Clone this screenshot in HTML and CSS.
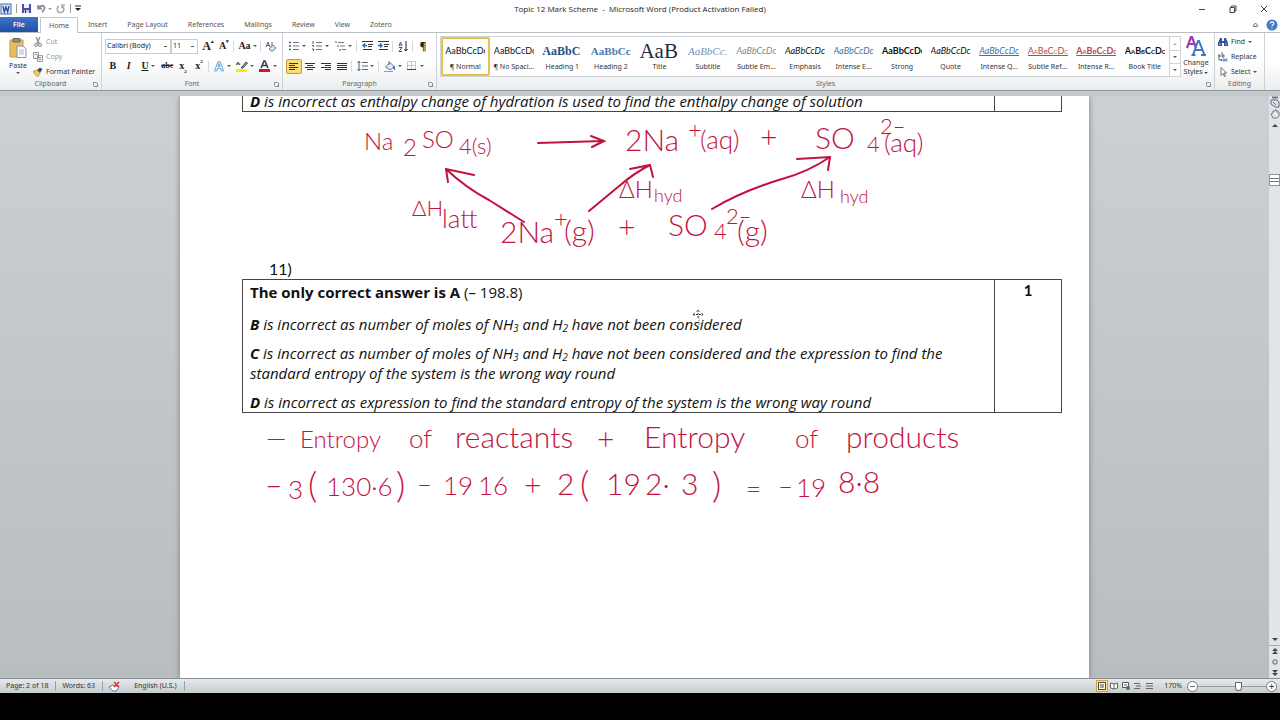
FILE: index.html
```
<!DOCTYPE html>
<html lang="en">
<head>
    <meta charset="UTF-8">
    <meta name="viewport" content="width=device-width, initial-scale=1.0">
    <title>Topic 12 Mark Scheme - Microsoft Word</title>
    <link rel="stylesheet" href="styles.css">
</head>
<body>
    <div class="app">
        <header class="title-bar">
            <div class="quick-access">
                <svg width="12" height="12" viewBox="0 0 12 12"><rect x="1" y="1" width="10" height="10" fill="#e4eefa" stroke="#3c6cb4"/><path d="M3 3l1.3 6L6 4l1.7 5L9 3" fill="none" stroke="#1f4f9f" stroke-width="1.4"/></svg>
                <span class="bar"></span>
                <button class="plain" aria-label="Save"><svg width="11" height="11" viewBox="0 0 11 11"><path d="M1 1h9v9H1z" fill="#4b4da8"/><path d="M3 1h5v4H3z" fill="#eef"/><path d="M3 7h5v3H3z" fill="#c9cdf0"/><path d="M4 7h1v3H4z" fill="#334"/></svg></button>
                <button class="plain" aria-label="Undo"><svg width="16" height="11" viewBox="0 0 16 11"><path d="M2 2v3.5h4M2.5 5C4 2 8.500 2 8.500 5c0 2-1.500 3-2.500 4" fill="none" stroke="#8b90a3" stroke-width="1.800"/><path d="M12 5h4l-2 2z" fill="#999"/></svg></button>
                <button class="plain" aria-label="Redo"><svg width="10" height="11" viewBox="0 0 10 11"><path d="M3 3C0 5 1 9.500 4.500 9.500S9 5 6.500 3.500M9 2H6v3.500" fill="none" stroke="#a9acb4" stroke-width="1.600"/></svg></button>
                <span class="bar"></span>
                <button class="plain" aria-label="Customize toolbar"><svg width="6" height="7" viewBox="0 0 6 7"><path d="M0 1h6" stroke="#222"/><path d="M0 3h6L3 6z" fill="#222"/></svg></button>
            </div>
            <h1 class="title">Topic 12 Mark Scheme &nbsp;-&nbsp; Microsoft Word (Product Activation Failed)</h1>
            <div class="window-buttons">
                <button class="plain" aria-label="Minimize"><svg width="8" height="8" viewBox="0 0 8 8"><path d="M1 4.500h6" stroke="#444"/></svg></button>
                <button class="plain" aria-label="Restore"><svg width="8" height="8" viewBox="0 0 8 8"><path d="M1 2.500h4.500v5H1zM2.500 2.500V1H7v5H5.500" fill="none" stroke="#444"/></svg></button>
                <button class="plain" aria-label="Close"><svg width="8" height="8" viewBox="0 0 8 8"><path d="M1 1l6 6M7 1L1 7" stroke="#444"/></svg></button>
            </div>
        </header>

        <nav class="tabs">
            <button class="tab file">File</button>
            <button class="tab active">Home</button>
            <button class="tab">Insert</button>
            <button class="tab">Page Layout</button>
            <button class="tab">References</button>
            <button class="tab">Mailings</button>
            <button class="tab">Review</button>
            <button class="tab">View</button>
            <button class="tab">Zotero</button>
            <div class="tab-help">
                <button class="plain" aria-label="Collapse ribbon"><svg width="7" height="6" viewBox="0 0 7 6"><path d="M1 4l2.500-3L6 4M1.500 4.500h4" fill="none" stroke="#666"/></svg></button>
                <button class="plain" aria-label="Help"><svg width="12" height="12" viewBox="0 0 12 12"><circle cx="6" cy="6" r="5.500" fill="#3f7cc8"/><path d="M4.300 4.500c0-2.300 3.500-2.200 3.500 0C7.800 5.800 6 5.800 6 7.200M6 8.400v1.200" fill="none" stroke="#fff" stroke-width="1.200"/></svg></button>
            </div>
        </nav>

        <div class="ribbon">
            <section class="group clipboard">
                <div class="group-body">
                    <button class="big-button">
                        <svg width="20" height="22" viewBox="0 0 20 22"><path d="M2 3h13v17H2z" fill="#e9bd5e" stroke="#c99a3c"/><path d="M5 1.500h7V5H5z" fill="#8d8d8d" stroke="#666"/><path d="M9 9h6l3 3v8.500H9z" fill="#fff" stroke="#7c93b8"/><path d="M11 13h5M11 15h5M11 17h5" stroke="#a6b9d6"/></svg>
                        <span>Paste</span>
                        <i class="caret"></i>
                    </button>
                    <div class="command-list">
                        <button class="command muted"><svg width="10" height="10" viewBox="0 0 10 10"><path d="M3 0l3.500 7M7 0L3.500 7" stroke="#888" stroke-width="1.200"/><circle cx="3" cy="8" r="1.500" fill="none" stroke="#888"/><circle cx="7" cy="8" r="1.500" fill="none" stroke="#888"/></svg>Cut</button>
                        <button class="command muted"><svg width="10" height="10" viewBox="0 0 10 10"><path d="M.5.500h5v6h-5zM4.500 3.500h5v6h-5z" fill="#eee" stroke="#999"/><path d="M6 5.500h2M6 7.500h2M2 2.500h2" stroke="#999"/></svg>Copy</button>
                        <button class="command"><svg width="10" height="10" viewBox="0 0 10 10"><path d="M0 4l4-1 3 3-2 4C3 9 1 7 0 4z" fill="#efc95b" stroke="#b38a2a" stroke-width=".6"/><path d="M4 3l3-2.500L9.500 2 7 6z" fill="#454f75"/></svg>Format Painter</button>
                    </div>
                </div>
                <h2 class="group-name">Clipboard <i class="launcher"></i></h2>
            </section>

            <section class="group font">
                <div class="group-body rows">
                    <div class="tool-row">
                        <select class="font-select" aria-label="Font"><option>Calibri (Body)</option></select>
                        <select class="size-select" aria-label="Font size"><option>11</option></select>
                        <button class="tool serif grow-font">A<sup>▴</sup></button>
                        <button class="tool serif">A<sup>▾</sup></button>
                        <span class="sep"></span>
                        <button class="tool drop serif">Aa<i class="caret"></i></button>
                        <span class="sep"></span>
                        <button class="tool" aria-label="Clear formatting"><svg width="12" height="11" viewBox="0 0 12 11"><path d="M1 6l2-5 2 5M2 4.500h2M7 1v5" fill="none" stroke="#567"/><path d="M4 8l4-4 3 3-3 3H6z" fill="#d9dbf0" stroke="#7782a3"/></svg></button>
                    </div>
                    <div class="tool-row">
                        <button class="tool serif">B</button>
                        <button class="tool serif italic">I</button>
                        <button class="tool drop serif"><u>U</u><i class="caret"></i></button>
                        <button class="tool serif small"><s>abc</s></button>
                        <button class="tool serif">x<sub>2</sub></button>
                        <button class="tool serif">x<sup>2</sup></button>
                        <span class="sep"></span>
                        <button class="tool drop" aria-label="Text effects"><svg width="12" height="12" viewBox="0 0 12 12"><path d="M1.500 11L5 1.500h2L10.500 11H8.300L7.600 8.500H4.400L3.700 11zM5 6.700h2L6 3.500z" fill="#e9f4fd" stroke="#6ea6d6"/></svg><i class="caret"></i></button>
                        <button class="tool drop" aria-label="Highlight colour"><svg width="12" height="12" viewBox="0 0 12 12"><path d="M0 5l2-3 2 3M5 8l5-6 1.500 1L7 8z" fill="#9cae8e" stroke="#444"/><path d="M0 9h11v3H0z" fill="#f8f000"/></svg><i class="caret"></i></button>
                        <button class="tool drop" aria-label="Font colour"><svg width="12" height="12" viewBox="0 0 12 12"><path d="M2 8l3-7h1l3 7M3 5.500h5" fill="none" stroke="#27395f" stroke-width="1.500"/><path d="M0 9h11v3H0z" fill="#d8141c"/></svg><i class="caret"></i></button>
                    </div>
                </div>
                <h2 class="group-name">Font <i class="launcher"></i></h2>
            </section>

            <section class="group paragraph">
                <div class="group-body rows">
                    <div class="tool-row">
                        <button class="tool drop" aria-label="Bullets"><svg width="11" height="10" viewBox="0 0 11 10"><path d="M0 1.500h2M0 5h2M0 8.500h2" stroke="#3d5a92" stroke-width="1.500"/><path d="M4 1.500h6M4 5h6M4 8.500h6" stroke="#777"/></svg><i class="caret"></i></button>
                        <button class="tool drop" aria-label="Numbering"><svg width="11" height="10" viewBox="0 0 11 10"><path d="M1 0v3M0 4.500h1.500v1.500M0 8h1.500v2" fill="none" stroke="#3d5a92"/><path d="M4 1.500h6M4 5h6M4 8.500h6" stroke="#777"/></svg><i class="caret"></i></button>
                        <button class="tool drop" aria-label="Multilevel list"><svg width="11" height="10" viewBox="0 0 11 10"><path d="M1 0v2M3 4v2M5 8v2" stroke="#3d5a92"/><path d="M3 1.500h6M5 5h5M7 8.500h4" stroke="#777"/></svg><i class="caret"></i></button>
                        <span class="sep"></span>
                        <button class="tool" aria-label="Decrease indent"><svg width="11" height="10" viewBox="0 0 11 10"><path d="M0 .5h11M6 3.500h5M6 5.500h4M1 8.500h9" stroke="#333"/><path d="M5 4.500H1M3 2.500l-2 2 2 2" fill="none" stroke="#3262ab" stroke-width="1.300"/></svg></button>
                        <button class="tool" aria-label="Increase indent"><svg width="11" height="10" viewBox="0 0 11 10"><path d="M0 .5h11M6 3.500h5M6 5.500h4M1 8.500h9" stroke="#333"/><path d="M0 4.500h4M2 2.500l2 2-2 2" fill="none" stroke="#3262ab" stroke-width="1.300"/></svg></button>
                        <span class="sep"></span>
                        <button class="tool" aria-label="Sort"><svg width="11" height="11" viewBox="0 0 11 11"><path d="M1 5l1.500-4L4 5M1.500 4h2" fill="none" stroke="#355ba0"/><path d="M1 6.500h3l-3 4h3" fill="none" stroke="#9a2635"/><path d="M8 0v10M6.500 8L8 10l1.500-2" fill="none" stroke="#222"/></svg></button>
                        <span class="sep"></span>
                        <button class="tool pilcrow">¶</button>
                    </div>
                    <div class="tool-row">
                        <button class="tool on" aria-label="Align left"><svg width="10" height="9" viewBox="0 0 10 9"><path d="M0 1.500h9M0 3.500h6M0 5.500h9M0 7.500h6" stroke="#333"/></svg></button>
                        <button class="tool" aria-label="Center"><svg width="10" height="9" viewBox="0 0 10 9"><path d="M0 1.500h10M2 3.500h6M0 5.500h10M2 7.500h6" stroke="#333"/></svg></button>
                        <button class="tool" aria-label="Align right"><svg width="10" height="9" viewBox="0 0 10 9"><path d="M0 1.500h10M4 3.500h6M0 5.500h10M4 7.500h6" stroke="#333"/></svg></button>
                        <button class="tool" aria-label="Justify"><svg width="10" height="9" viewBox="0 0 10 9"><path d="M0 1.500h10M0 3.500h10M0 5.500h10M0 7.500h10" stroke="#333"/></svg></button>
                        <span class="sep"></span>
                        <button class="tool drop" aria-label="Line spacing"><svg width="11" height="10" viewBox="0 0 11 10"><path d="M2 0v10M.5 2L2 .5 3.500 2M.5 8L2 9.500 3.500 8" fill="none" stroke="#3d5a92"/><path d="M5 1.500h6M5 5h6M5 8.500h6" stroke="#666"/></svg><i class="caret"></i></button>
                        <span class="sep"></span>
                        <button class="tool drop" aria-label="Shading"><svg width="12" height="11" viewBox="0 0 12 11"><path d="M1.500 6L6 1.500 10 5.500 6.500 9z" fill="#e7edf7" stroke="#5b6d91"/><path d="M5 4V0" stroke="#3d6db8"/><path d="M9 5c2 0 2.500 2 2 4-1 0-2-1-2-4z" fill="#3d6db8"/><path d="M0 10.500h9" stroke="#999"/></svg><i class="caret"></i></button>
                        <button class="tool drop" aria-label="Borders"><svg width="11" height="10" viewBox="0 0 11 10"><path d="M.5.500h8v8h-8zM4.500.500v8M.5 4.500h8" fill="none" stroke="#999" stroke-dasharray="1 1"/><path d="M0 8.500h9" stroke="#444"/></svg><i class="caret"></i></button>
                    </div>
                </div>
                <h2 class="group-name">Paragraph <i class="launcher"></i></h2>
            </section>

            <section class="group styles">
                <div class="group-body">
                    <div class="gallery">
                        <button class="style selected"><span class="sample">AaBbCcDc</span>¶ Normal</button>
                        <button class="style"><span class="sample">AaBbCcDc</span>¶ No Spaci...</button>
                        <button class="style"><span class="sample heading1">AaBbC</span>Heading 1</button>
                        <button class="style"><span class="sample heading2">AaBbCc</span>Heading 2</button>
                        <button class="style"><span class="sample doc-title">AaB</span>Title</button>
                        <button class="style"><span class="sample subtitle">AaBbCc.</span>Subtitle</button>
                        <button class="style"><span class="sample italic grey">AaBbCcDc</span>Subtle Em...</button>
                        <button class="style"><span class="sample italic">AaBbCcDc</span>Emphasis</button>
                        <button class="style"><span class="sample italic blue">AaBbCcDc</span>Intense E...</button>
                        <button class="style"><span class="sample strong">AaBbCcDc</span>Strong</button>
                        <button class="style"><span class="sample italic">AaBbCcDc</span>Quote</button>
                        <button class="style"><span class="sample italic blue underline">AaBbCcDc</span>Intense Q...</button>
                        <button class="style"><span class="sample caps red underline">AaBbCcDc</span>Subtle Ref...</button>
                        <button class="style"><span class="sample caps red underline strong">AaBbCcDc</span>Intense R...</button>
                        <button class="style"><span class="sample caps strong">AaBbCcDc</span>Book Title</button>
                        <div class="gallery-scroll">
                            <button aria-label="Previous styles"><i class="caret up"></i></button>
                            <button aria-label="Next styles"><i class="caret"></i></button>
                            <button aria-label="More styles"><i class="caret more"></i></button>
                        </div>
                    </div>
                    <button class="big-button">
                        <svg width="20" height="20" viewBox="0 0 20 20"><path d="M1 12L5 1h1l4 11M3 8h5" fill="none" stroke="#9b3fb5" stroke-width="2.200"/><path d="M7 19l5-14h1l5.500 14M9 14h7M5.500 19h4M15 19h5" fill="none" stroke="#3f78c4" stroke-width="2"/></svg>
                        <span>Change Styles <i class="caret"></i></span>
                    </button>
                </div>
                <h2 class="group-name">Styles <i class="launcher"></i></h2>
            </section>

            <section class="group editing">
                <div class="group-body">
                    <div class="command-list">
                        <button class="command"><svg width="10" height="10" viewBox="0 0 10 10"><path d="M2 1h2v3h2V1h2l2 5v3H6V6H4v3H0V6z" fill="#34549a"/><path d="M1 7h2M7 7h2" stroke="#a8bde6"/></svg>Find<i class="caret"></i></button>
                        <button class="command"><svg width="10" height="10" viewBox="0 0 10 10"><path d="M0 3h2v2H0zM4 0v5h2V3H4" fill="none" stroke="#444" stroke-width=".8"/><path d="M1 6v2h3M3 7l1 1-1 1" fill="none" stroke="#3b7c4a"/><path d="M9.500 7H8v2h1.500M5 7h2v2H5z" fill="none" stroke="#3366ad" stroke-width=".8"/></svg>Replace</button>
                        <button class="command"><svg width="10" height="10" viewBox="0 0 10 10"><path d="M3 .5v8l2-2 1.500 3 1-.5L6 6h2.500z" fill="#fff" stroke="#555" stroke-width=".8"/></svg>Select<i class="caret"></i></button>
                    </div>
                </div>
                <h2 class="group-name">Editing</h2>
            </section>
        </div>

        <div class="workspace">
            <main class="desk">
                <article class="page">
                    <table class="answer previous">
                        <tr>
                            <td><p><b>D</b> is incorrect as enthalpy change of hydration is used to find the enthalpy change of solution</p></td>
                            <td class="mark"></td>
                        </tr>
                    </table>

                    <!-- Hess cycle -->
                    <svg class="ink" viewBox="0 0 820 147">
                        <g class="arrows">
                            <path d="M296 31L361 29M349 24L362 29L350 35"/>
                            <path d="M282 110L247 88Q224 76 204 57M232 63L204 57L206 70"/>
                            <path d="M347 99L376 75Q392 61 408 53M388 57L408 53L411 65"/>
                            <path d="M470 97Q500 79 540 67Q566 60 588 45M555 47L588 45L586 58"/>
                        </g>
                        <text x="122" y="38" class="ink-l">Na</text>
                        <text x="161" y="44" class="ink-l">2</text>
                        <text x="180" y="36" class="ink-l">SO</text>
                        <text x="217" y="42" class="ink-m">4(s)</text>
                        <text x="383" y="39" class="ink-xxl">2Na</text>
                        <text x="446" y="26" class="ink-l">+</text>
                        <text x="458" y="37" class="ink-xl">(aq)</text>
                        <text x="518" y="36" class="ink-xxl">+</text>
                        <text x="573" y="37" class="ink-xxl">SO</text>
                        <text x="625" y="40" class="ink-m">4</text>
                        <text x="638" y="22" class="ink-m">2–</text>
                        <text x="642" y="40" class="ink-xl">(aq)</text>
                        <text x="170" y="104" class="ink-m">ΔH</text>
                        <text x="200" y="116" class="ink-xl">latt</text>
                        <text x="377" y="86" class="ink-l">ΔH</text>
                        <text x="412" y="90" class="ink-s">hyd</text>
                        <text x="559" y="86" class="ink-l">ΔH</text>
                        <text x="598" y="91" class="ink-s">hyd</text>
                        <text x="258" y="131" class="ink-xxl">2Na</text>
                        <text x="312" y="115" class="ink-l">+</text>
                        <text x="322" y="130" class="ink-xxl">(g)</text>
                        <text x="376" y="126" class="ink-xxl">+</text>
                        <text x="426" y="124" class="ink-xxl">SO</text>
                        <text x="472" y="127" class="ink-m">4</text>
                        <text x="484" y="112" class="ink-m">2–</text>
                        <text x="495" y="130" class="ink-xxl">(g)</text>
                    </svg>

                    <p class="question">11)</p>
                    <table class="answer">
                        <tr>
                            <td>
                                <p class="correct"><b>The only correct answer is A</b> (– 198.8)</p>
                                <p><b>B</b> is incorrect as number of moles of NH<sub>3</sub> and H<sub>2</sub> have not been considered</p>
                                <p><b>C</b> is incorrect as number of moles of NH<sub>3</sub> and H<sub>2</sub> have not been considered and the expression to find the standard entropy of the system is the wrong way round</p>
                                <p><b>D</b> is incorrect as expression to find the standard entropy of the system is the wrong way round</p>
                            </td>
                            <td class="mark">1</td>
                        </tr>
                    </table>

                    <!-- Entropy working -->
                    <svg class="ink" viewBox="0 0 820 110">
                        <text x="24" y="34" class="ink-xl">—</text>
                        <text x="58" y="35" class="ink-l">Entropy</text>
                        <text x="167" y="35" class="ink-xl">of</text>
                        <text x="213" y="35" class="ink-xxl">reactants</text>
                        <text x="355" y="37" class="ink-xxl">+</text>
                        <text x="402" y="35" class="ink-xxl">Entropy</text>
                        <text x="553" y="35" class="ink-xl">of</text>
                        <text x="604" y="35" class="ink-xxl">products</text>
                        <text x="23" y="82" class="ink-xxl">–</text>
                        <text x="46" y="86" class="ink-xl">3</text>
                        <text x="66" y="85" class="ink-bracket">(</text>
                        <text x="84" y="83" class="ink-xl">130·6</text>
                        <text x="154" y="85" class="ink-bracket">)</text>
                        <text x="175" y="80" class="ink-xl">–</text>
                        <text x="201" y="82" class="ink-xl">19</text>
                        <text x="236" y="82" class="ink-xl">16</text>
                        <text x="282" y="83" class="ink-xxl">+</text>
                        <text x="315" y="82" class="ink-xxl">2</text>
                        <text x="338" y="84" class="ink-bracket">(</text>
                        <text x="364" y="82" class="ink-xxl">19</text>
                        <text x="403" y="82" class="ink-xxl">2·</text>
                        <text x="439" y="82" class="ink-xxl">3</text>
                        <text x="470" y="85" class="ink-bracket">)</text>
                        <text x="504" y="85" class="ink-xl">=</text>
                        <text x="536" y="82" class="ink-xl">–</text>
                        <text x="554" y="84" class="ink-xl">19</text>
                        <text x="596" y="80" class="ink-xxl">8·8</text>
                    </svg>

                    <svg class="pointer" width="12" height="18" viewBox="0 0 12 18"><path d="M6 1v9M1 5.500h10M4.500 2.500L6 1l1.500 1.500M2.500 4L1 5.500 2.500 7M9.500 4L11 5.500 9.500 7" fill="none" stroke="#444" stroke-dasharray="2 1"/><path d="M7 7v9l2-2 2 3" fill="none" stroke="#777" stroke-dasharray="1 1"/></svg>
                </article>
            </main>
            <aside class="scrollbar">
                <svg width="10" height="24" viewBox="0 0 10 24"><path d="M2 1.500h6" stroke="#777" stroke-width="2"/><path d="M1 4h6l2 2v5H5L1 8zM3 6l3 3" fill="none" stroke="#667"/><path d="M3 22L1 18l2-1v-2h2v-1h2v2h2v4l-2 2z" fill="none" stroke="#778"/></svg>
                <button class="arrow" aria-label="Scroll up"><i class="caret up dark"></i></button>
                <div class="track"><div class="thumb"></div></div>
                <button class="arrow" aria-label="Scroll down"><i class="caret dark"></i></button>
                <button class="arrow browse" aria-label="Previous page"><svg width="6" height="7" viewBox="0 0 6 7"><path d="M3 0l3 3H0zM3 3l3 3H0z" fill="#444"/></svg></button>
                <button class="arrow" aria-label="Select browse object"><svg width="6" height="6" viewBox="0 0 6 6"><circle cx="3" cy="3" r="2.200" fill="none" stroke="#555"/></svg></button>
                <button class="arrow" aria-label="Next page"><svg width="6" height="7" viewBox="0 0 6 7"><path d="M0 1h6L3 4zM0 4h6L3 7z" fill="#444"/></svg></button>
            </aside>
        </div>

        <footer class="status-bar">
            <span class="status">Page: 2 of 18</span>
            <span class="status">Words: 63</span>
            <span class="status spelling"><svg width="12" height="11" viewBox="0 0 12 11"><path d="M0 6l4-2 6 2-3 4H4z" fill="#fff" stroke="#6673a0"/><path d="M5 1l5 5M10 1L5 6" stroke="#d03a32" stroke-width="1.500"/></svg></span>
            <span class="status">English (U.S.)</span>
            <div class="view-controls">
                <button class="view on" aria-label="Print layout"><svg width="8" height="8" viewBox="0 0 8 8"><path d="M.5.500h7v7h-7zM2 3h4M2 5h4" fill="#fff" stroke="#444"/></svg></button>
                <button class="view" aria-label="Full screen reading"><svg width="8" height="8" viewBox="0 0 8 8"><path d="M.5 1L4 2l3.500-1v5L4 7 .5 6zM4 2v5" fill="#fff" stroke="#666"/></svg></button>
                <button class="view" aria-label="Web layout"><svg width="8" height="8" viewBox="0 0 8 8"><path d="M.5.500h6v5h-6zM2 3h3" fill="#fff" stroke="#555"/><circle cx="6" cy="6" r="2" fill="#3d7a66"/></svg></button>
                <button class="view" aria-label="Outline"><svg width="8" height="8" viewBox="0 0 8 8"><path d="M0 1.500h6M2 4h5M0 6.500h6" stroke="#666"/></svg></button>
                <button class="view" aria-label="Draft"><svg width="8" height="8" viewBox="0 0 8 8"><path d="M0 1.500h7M0 4h7M0 6.500h7" stroke="#666"/></svg></button>
                <span class="zoom-value">170%</span>
                <button class="round" aria-label="Zoom out">−</button>
                <input class="zoom-slider" type="range" min="0" max="100" value="60" aria-label="Zoom">
                <button class="round" aria-label="Zoom in">+</button>
            </div>
        </footer>
    </div>
</body>
</html>
```
FILE: styles.css
```
* {
    box-sizing: border-box;
}
body {
    margin: 0;
    background-color: #000;
    color: #333;
    font-family: "Noto Sans", "Open Sans", sans-serif;
    font-size: 7px;
    line-height: 10px;
}
button {
    margin: 0;
    padding: 0;
    border: 0;
    background: none;
    color: inherit;
    font: inherit;
    display: flex;
    align-items: center;
    justify-content: center;
}
h1, h2, p {
    margin: 0;
    font-size: inherit;
    font-weight: normal;
}
svg {
    display: block;
    flex-shrink: 0;
}
.app {
    display: flex;
    flex-direction: column;
    height: calc(100vh - 27px);
    background-color: #fff;
}

/* Title bar and tabs */
.title-bar {
    display: grid;
    grid-template-columns: 1fr auto 1fr;
    align-items: center;
    height: 17px;
}
.quick-access {
    display: flex;
    align-items: center;
    gap: 4px;
}
.bar {
    width: 1px;
    height: 9px;
    background-color: #999;
}
.title {
    color: #222;
    font-family: "Open Sans", sans-serif;
    font-size: 8px;
}
.window-buttons {
    display: flex;
    justify-content: flex-end;
    gap: 23px;
    padding-right: 12px;
}
.tabs {
    display: flex;
    height: 16px;
    border-bottom: 1px solid #b9bfc5;
}
.tab {
    padding: 0 10px;
    color: #555;
}
.tab.file {
    width: 38px;
    margin-right: 2px;
    background: linear-gradient(#3f74c6, #1f50a8);
    color: #fff;
    font-weight: 600;
}
.tab.active {
    height: 16px;
    padding: 0 8px;
    border: 1px solid #c3c8cd;
    border-bottom: 0;
    background-color: #fff;
}
.tab-help {
    display: flex;
    align-items: center;
    gap: 7px;
    margin-left: auto;
    padding-right: 2px;
}

/* Ribbon */
.ribbon {
    display: flex;
    height: 58px;
    background: linear-gradient(#fff 50%, #eaedef);
    border-bottom: 1px solid #90969b;
}
.group {
    display: flex;
    flex-direction: column;
    padding: 4px 3px 0;
    border-right: 1px solid #cdd2d7;
}
.group-body {
    display: flex;
    flex: 1;
    min-height: 0;
}
.group-name {
    position: relative;
    height: 11px;
    text-align: center;
    color: #666;
}
.launcher {
    position: absolute;
    right: 1px;
    top: 3px;
    width: 4px;
    height: 4px;
    border: solid #999;
    border-width: 1px 0 0 1px;
}
.launcher::after {
    content: "";
    position: absolute;
    right: -1px;
    bottom: -1px;
    width: 3px;
    height: 3px;
    border: solid #888;
    border-width: 0 1px 1px 0;
}
.clipboard {
    width: 102px;
}
.font {
    width: 181px;
}
.paragraph {
    width: 154px;
}
.styles {
    flex: 1;
    min-width: 0;
    padding-top: 3px;
}
.editing {
    width: 50px;
    margin-right: 15px;
}
.big-button {
    flex-direction: column;
    justify-content: flex-start;
    width: 30px;
    line-height: 9px;
    gap: 2px;
}
.command-list {
    display: flex;
    flex-direction: column;
    gap: 5px;
}
.command {
    gap: 3px;
    justify-content: flex-start;
    white-space: nowrap;
}
.command.muted {
    color: #999;
}
.caret {
    display: inline-block;
    border: 2px solid transparent;
    border-top-color: #555;
    border-bottom: 0;
}
.caret.up {
    border-top: 0;
    border-bottom: 2px solid #aaa;
}
.caret.dark {
    border-width: 3px;
    border-top-color: #444;
    border-bottom: 0;
}
.caret.up.dark {
    border-top: 0;
    border-bottom: 3px solid #444;
}
.caret.more {
    box-shadow: 0 -2px 0 -1px #555;
}
.rows {
    flex-direction: column;
    gap: 2px;
}
.tool-row {
    display: flex;
    align-items: center;
    height: 18px;
}
select {
    height: 15px;
    padding: 0 1px;
    border: 1px solid #c9cdd2;
    border-radius: 0;
    background-color: #fff;
    color: #222;
    font: inherit;
    appearance: none;
    background-image: linear-gradient(#555, #555);
    background-repeat: no-repeat;
    background-position: right 3px center;
    background-size: 3px 1px;
}
.font-select {
    width: 66px;
}
.size-select {
    width: 27px;
    margin-right: 2px;
}
.tool {
    width: 16px;
    height: 15px;
    color: #222;
}
.tool.drop {
    width: 23px;
    gap: 2px;
}
.tool.on {
    border: 1px solid #c89b34;
    border-radius: 2px;
    background-color: #fbdc70;
}
.tool sub, .tool sup {
    font-size: 5px;
    line-height: 5px;
}
.tool sup {
    align-self: flex-start;
}
.tool sub {
    align-self: flex-end;
}
.serif {
    font-family: "Liberation Serif", serif;
    font-size: 10px;
    font-weight: bold;
}
.grow-font {
    font-size: 12px;
}
.small {
    font-size: 8px;
}
.italic {
    font-style: italic;
}
.pilcrow {
    font-size: 10px;
    font-weight: bold;
}
.sep {
    width: 1px;
    height: 11px;
    margin: 0 2px 0 1px;
    background-color: #d5d8dc;
}

/* Style gallery */
.gallery {
    display: grid;
    grid-template-columns: repeat(15, minmax(0, 1fr)) 11px;
    flex: 1;
    height: 41px;
    border: 1px solid #d0d4d8;
    background-color: #fff;
}
.style {
    flex-direction: column;
    justify-content: flex-end;
    gap: 1px;
    padding: 0 3px 4px;
    overflow: hidden;
    white-space: nowrap;
}
.style.selected {
    border: 2px solid #e6c34e;
    padding: 0 1px 2px;
    border-radius: 2px;
}
.sample {
    width: 40px;
    height: 20px;
    overflow: hidden;
    color: #111;
    font-family: Lato, sans-serif;
    font-size: 9px;
    line-height: 20px;
    text-align: left;
}
.heading1, .heading2, .subtitle, .doc-title {
    font-family: "Liberation Serif", serif;
    color: #2a4f80;
    font-size: 12px;
    font-weight: bold;
}
.heading2 {
    color: #467ab0;
    font-size: 11px;
}
.subtitle {
    color: #6f94bd;
    font-size: 11px;
    font-style: italic;
    font-weight: normal;
}
.doc-title {
    color: #1d2a40;
    font-size: 21px;
    font-weight: normal;
}
.grey {
    color: #888;
}
.blue {
    color: #3f73a8;
}
.red {
    color: #b8444c;
}
.strong {
    font-weight: bold;
}
.caps {
    font-variant: small-caps;
}
.underline {
    text-decoration: underline;
}
.gallery-scroll {
    display: grid;
    grid-template-rows: repeat(3, 1fr);
    border-left: 1px solid #d0d4d8;
}
.gallery-scroll button + button {
    border-top: 1px solid #d0d4d8;
}

/* Document area */
.workspace {
    display: flex;
    flex: 1;
    min-height: 0;
    border-top: 5px solid #c3c8cb;
    background: linear-gradient(#cbd0d4, #b8bdc0);
}
.desk {
    display: flex;
    justify-content: center;
    flex: 1;
    overflow: hidden;
}
.page {
    position: relative;
    width: 100%;
    max-width: 909px;
    padding: 0 27px 0 62px;
    overflow: hidden;
    background-color: #fff;
    box-shadow: 0 0 6px #777d80;
    color: #111;
    font-family: "Open Sans", sans-serif;
    font-size: 15px;
    line-height: 20px;
}
.answer {
    width: 100%;
    border-collapse: collapse;
}
.answer.previous {
    margin-top: -6px;
}
.answer td {
    padding: 2px 7px 0;
    border: 1px solid #444;
    vertical-align: top;
}
.answer.previous td {
    padding-top: 0;
}
.answer p {
    font-style: italic;
    margin-bottom: 9px;
}
.answer p:last-child {
    margin-bottom: 0;
}
.answer .correct {
    font-style: normal;
    margin-bottom: 12px;
}
.answer sub {
    font-size: 10px;
    line-height: 10px;
    vertical-align: -2px;
}
.answer .mark {
    width: 67px;
    padding-top: 0;
    font-family: Lato, sans-serif;
    font-weight: bold;
    text-align: center;
}
.question {
    padding-left: 27px;
    font-family: Lato, sans-serif;
    font-size: 16px;
}
.ink {
    width: 100%;
    overflow: visible;
    font-family: Lato, sans-serif;
    font-weight: 300;
    fill: #c4113f;
}
.arrows {
    fill: none;
    stroke: #c4113f;
    stroke-width: 2;
    stroke-linecap: round;
}
.ink-s {
    font-size: 18px;
}
.ink-m {
    font-size: 22px;
}
.ink-l {
    font-size: 24px;
}
.ink-xl {
    font-size: 26px;
}
.ink-xxl {
    font-size: 30px;
}
.ink-bracket {
    font-size: 36px;
}
.pointer {
    position: absolute;
    left: 512px;
    top: 213px;
}

/* Scrollbar */
.scrollbar {
    display: flex;
    flex-direction: column;
    align-items: center;
    width: 11px;
    background-color: #dfe5e9;
}
.arrow {
    width: 11px;
    height: 11px;
}
.arrow.browse {
    border-top: 1px solid #aaa;
}
.track {
    flex: 1;
    width: 100%;
    padding-top: 43px;
}
.thumb {
    height: 12px;
    border: 1px solid #8f969c;
    background: linear-gradient(#fff 3px, #777 3px 4px, #fff 4px 6px, #777 6px 7px, #fff 7px);
}

/* Status bar */
.status-bar {
    display: flex;
    align-items: center;
    height: 15px;
    border-top: 1px solid #8a9094;
    background: linear-gradient(#e6eaec, #c6cbce);
}
.status {
    padding: 0 7px 0 6px;
    border-right: 1px solid #9ba1a6;
}
.status.spelling {
    border-right: 0;
}
.view-controls {
    display: flex;
    align-items: center;
    margin-left: auto;
    padding-right: 3px;
}
.view {
    width: 12px;
    height: 12px;
}
.view.on {
    border: 1px solid #cda640;
    background-color: #fbe58b;
}
.zoom-value {
    padding: 0 5px 0 8px;
}
.round {
    width: 11px;
    height: 11px;
    border: 1px solid #777;
    border-radius: 50%;
    background-color: #fff;
    font-size: 10px;
    line-height: 8px;
}
.zoom-slider {
    width: 68px;
    height: 10px;
    margin: 0;
    appearance: none;
    background: linear-gradient(#999, #999) center / 100% 1px no-repeat;
}
.zoom-slider::-webkit-slider-thumb {
    appearance: none;
    width: 7px;
    height: 9px;
    border: 1px solid #666;
    border-radius: 1px 1px 4px 4px;
    background-color: #fff;
}
```
